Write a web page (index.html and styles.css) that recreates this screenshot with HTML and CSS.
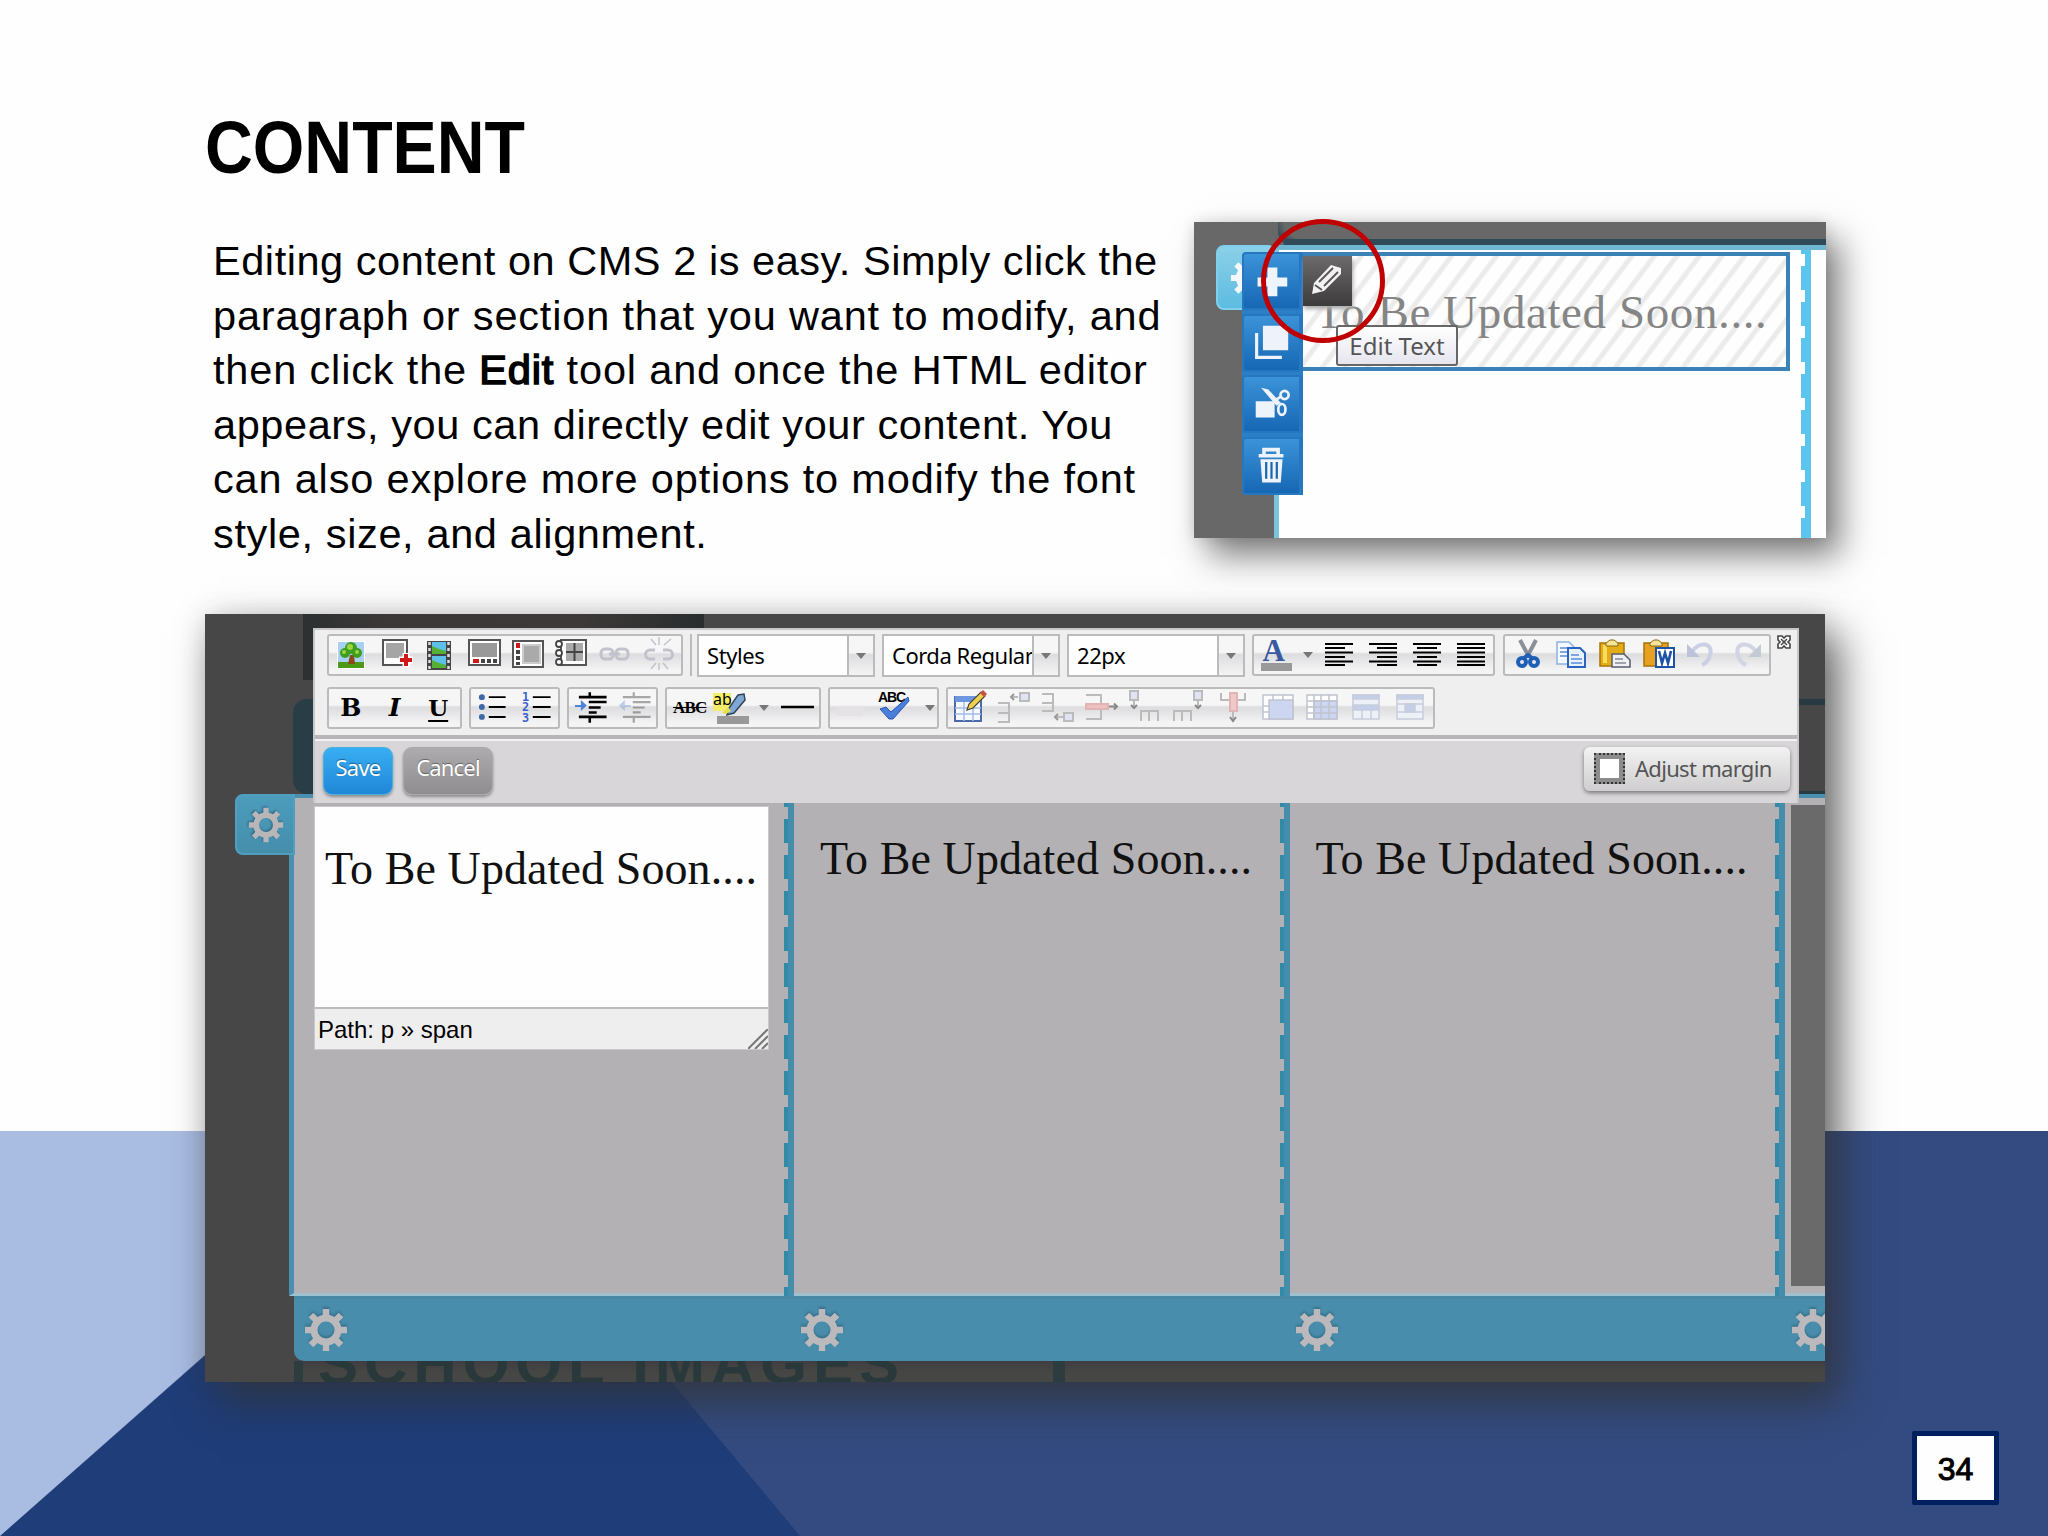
FILE: index.html
```html
<!DOCTYPE html>
<html lang="en">
<head>
<meta charset="utf-8">
<title>Content</title>
<link rel="stylesheet" href="styles.css">
</head>
<body>
<svg class="defs" aria-hidden="true">
  <symbol id="gear" viewBox="-22 -22 44 44">
    <g fill="none" stroke="currentColor">
      <circle r="12" stroke-width="7"/>
      <path stroke-width="6.5" d="M0-14V-21M0 14V21M-14 0H-21M14 0H21M-10-10L-15-15M10-10L15-15M-10 10L-15 15M10 10L15 15"/>
    </g>
  </symbol>
</svg>
<main class="slide">
  <svg class="backdrop" viewBox="0 0 2048 405" aria-hidden="true">
    <path fill="#334b80" d="M0 0H2048V405H0Z"/>
    <path fill="#1f3d79" d="M462 0L800 405H0Z"/>
    <path fill="#a9bce2" d="M0 0H459L0 405Z"/>
  </svg>
  <h1 class="title">CONTENT</h1>
  <section class="intro">
    <p class="copy">
      <span class="l1">Editing content on CMS 2 is easy. Simply click the</span>
      <span class="l2">paragraph or section that you want to modify, and</span>
      <span class="l3">then click the <b>Edit</b> tool and once the HTML editor</span>
      <span class="l4">appears, you can directly edit your content. You</span>
      <span class="l5">can also explore more options to modify the font</span>
      <span class="l6">style, size, and alignment.</span>
    </p>
    <div class="preview">
      <div class="preview-shot">
        <div class="shot-corner"></div>
        <div class="shot-band"></div>
        <div class="shot-page"><div class="shot-rail"></div></div>
        <div class="shot-tab"><svg><use href="#gear"/></svg></div>
        <div class="shot-block"><span class="corda">To Be Updated Soon....</span></div>
        <div class="shot-tools">
          <svg viewBox="0 0 61 60"><path d="M26 15h11v11h11v10H37v11H26V36H15V26h11z" fill="#eef4fb"/></svg>
          <svg viewBox="0 0 61 56"><path d="M21 9h28v27H21z" fill="#eef2fb"/><path d="M14 17v27h28" fill="none" stroke="#eef2fb" stroke-width="3.500"/></svg>
          <svg viewBox="0 0 61 56"><path d="M13 25h21v18H13z" fill="#eef2fb"/><path d="M19 10l8 2 14 15-5 3z" fill="#eef2fb"/><g fill="none" stroke="#eef2fb" stroke-width="3"><path d="M33 25l9-6"/><circle cx="45" cy="18" r="4.500"/><ellipse cx="42" cy="34" rx="4" ry="6"/></g></svg>
          <svg viewBox="0 0 61 61"><g fill="none" stroke="#eef2fb" stroke-width="4"><path d="M16 19h28M22 17v-5h16v5"/></g><path d="M18 23h25l-2 26H20z" fill="#eef2fb"/><path d="M24.500 26v19M30.500 26v19M36.500 26v19" stroke="#1a66ae" stroke-width="2.500"/></svg>
        </div>
        <div class="shot-pencil"><svg viewBox="0 0 49 50"><path d="M9 38l2-11 17-18 10 3v6L21 35z" fill="#f2f2f2"/><path d="M12 29l7 5M16 26l14-14M21 30l14-14" stroke="#555" stroke-width="1.800"/></svg></div>
        <div class="tooltip">Edit Text</div>
      </div>
      <div class="ring"></div>
    </div>
  </section>

  <section class="editor">
    <div class="ghost-top"></div><div class="ghost-side"></div><div class="ghost-line"></div>
    <div class="canvas">
      <div class="col first">
        <div class="textbox">
          <div class="text-area"><span class="corda">To Be Updated Soon....</span></div>
          <div class="path-bar"><span>Path: p » span</span><svg viewBox="0 0 20 20"><path d="M0 20L20 0M7 20L20 7M14 20L20 14" stroke="#777" stroke-width="2"/></svg></div>
        </div>
        <i class="rail"></i>
      </div>
      <div class="col"><span class="corda">To Be Updated Soon....</span><i class="rail"></i></div>
      <div class="col"><span class="corda">To Be Updated Soon....</span><i class="rail"></i></div>
      <div class="col last"></div>
    </div>
    <div class="footer-bar">
      <svg><use href="#gear"/></svg><svg><use href="#gear"/></svg><svg><use href="#gear"/></svg><svg><use href="#gear"/></svg>
    </div>
    <div class="under"><span>SCHOOL IMAGES</span></div>
    <div class="gear-tab"><svg><use href="#gear"/></svg></div>

    <div class="panel">
      <div class="bars">
        <div class="bar">
          <div class="group g1">
            <svg viewBox="0 0 44 40"><path d="M8 6h28v28H8z" fill="#fff"/><path d="M9 7h26v20H9z" fill="#a8d0f5"/><path d="M9 27h26v6H9z" fill="#4c9a18"/><path d="M21 20h4l1 9h-7z" fill="#8a4b16"/><g fill="#3f9d20"><circle cx="16" cy="18" r="5"/><circle cx="22" cy="13" r="6"/><circle cx="28" cy="18" r="5"/></g><g fill="#9bd63d"><circle cx="21" cy="12" r="3"/><circle cx="15" cy="17" r="2"/><circle cx="28" cy="17" r="2"/></g></svg>
            <svg viewBox="0 0 44 40"><path d="M10 5h24v25H10z" fill="#fff" stroke="#555" stroke-width="2"/><path d="M13 8h18v15H13z" fill="#a5a5a5"/><path d="M33 18v14M26 25h14" stroke="#fff" stroke-width="7"/><path d="M33 19v12M27 25h12" stroke="#d01818" stroke-width="4"/></svg>
            <svg viewBox="0 0 44 40"><path d="M10 6h24v29H10z" fill="#444"/><path d="M15 7h14v12H15zM15 21h14v12H15z" fill="#5cc0e8"/><path d="M15 11l7 3 7 2v3H15zM15 25l7 3 7 2v3H15z" fill="#55b035"/><path d="M12.500 7v27M31.500 7v27" stroke="#ddd" stroke-width="2.500" stroke-dasharray="3 3"/></svg>
            <svg viewBox="0 0 44 40"><path d="M8 5h31v25H8z" fill="#fff" stroke="#555" stroke-width="2"/><path d="M11 8h25v14H11z" fill="#999"/><path d="M12 26h6" stroke="#d01818" stroke-width="4"/><path d="M20 26h16" stroke="#444" stroke-width="4" stroke-dasharray="4 2"/></svg>
            <svg viewBox="0 0 44 40"><path d="M8 6h30v26H8z" fill="#fff" stroke="#555" stroke-width="2"/><path d="M18 10h17v18H18z" fill="#aaa" stroke="#ccc" stroke-width="2"/><path d="M13 8v5" stroke="#d01818" stroke-width="4"/><path d="M13 15v15" stroke="#444" stroke-width="4" stroke-dasharray="4 2"/></svg>
            <svg viewBox="0 0 44 40"><path d="M12 5h25v25H12z" fill="#fff" stroke="#555" stroke-width="2"/><path d="M17 8h17v18H17z" fill="#aaa"/><path d="M25.500 8v18M17 17h17" stroke="#444" stroke-width="2"/><g fill="#fff" stroke="#444" stroke-width="1.800"><circle cx="10" cy="9" r="3"/><circle cx="10" cy="18" r="3"/><circle cx="10" cy="27" r="3"/></g></svg>
            <svg viewBox="0 0 44 40" fill="none" stroke="#c2c2cc" stroke-width="3"><rect x="8" y="14" width="12" height="10" rx="4"/><rect x="23" y="14" width="12" height="10" rx="4"/><path d="M16 19h11"/></svg>
            <svg viewBox="0 0 44 40" fill="none" stroke="#c2c2cc" stroke-width="3"><path d="M18 15h-5a4 4 0 000 9h5M26 15h5a4 4 0 010 9h-5"/><path d="M14 4l5 6M22 2v8M34 4l-7 6M14 34l5-6M22 35v-7M31 34l-5-6" stroke-width="1.500"/></svg>
          </div>
          <i class="sep"></i>
          <div class="select s1"><span>Styles</span><i></i></div>
          <div class="select s2"><span>Corda Regular</span><i></i></div>
          <div class="select s3"><span>22px</span><i></i></div>
          <div class="group g2">
            <span class="letter-a">A</span><i class="caret"></i>
            <svg viewBox="0 0 44 40"><path d="M8 9h28M8 13h20M8 17.500h28M8 22h20M8 26.500h28M8 30h20" stroke="#000" stroke-width="2"/></svg>
            <svg viewBox="0 0 44 40"><path d="M8 9h28M16 13h20M8 17.500h28M16 22h20M8 26.500h28M16 30h20" stroke="#000" stroke-width="2"/></svg>
            <svg viewBox="0 0 44 40"><path d="M8 9h28M12 13h20M8 17.500h28M12 22h20M8 26.500h28M12 30h20" stroke="#000" stroke-width="2"/></svg>
            <svg viewBox="0 0 44 40"><path d="M8 9h28M8 13h28M8 17.500h28M8 22h28M8 26.500h28M8 30h28" stroke="#000" stroke-width="2"/></svg>
          </div>
          <div class="group g3">
            <svg viewBox="0 0 44 40"><path d="M14 5l9 17M30 5l-9 17" stroke="#8a8f98" stroke-width="4"/><g fill="none" stroke="#1e5fb8" stroke-width="4"><circle cx="16" cy="27" r="4"/><circle cx="28" cy="27" r="4"/><path d="M18 23l4-3 4 3"/></g></svg>
            <svg viewBox="0 0 44 40"><path d="M7 7h12l5 5v17H7z" fill="#f4f8ff" stroke="#8fb0e0" stroke-width="1.500"/><path d="M18 13h12l5 5v14H18z" fill="#e8f1ff" stroke="#2b63c0" stroke-width="2"/><path d="M10 13h7M10 17h7M10 21h7M21 20h8M21 24h11M21 28h11" stroke="#5b8cd8" stroke-width="1.500"/></svg>
            <svg viewBox="0 0 44 40"><path d="M6 8h24v23H6z" fill="#e5ac18" stroke="#a87408" stroke-width="1.500"/><path d="M9 10h4v18H9z" fill="#f9dc60"/><path d="M12 11V8l4-3h4l4 3v3z" fill="#f6e49a" stroke="#8a6a10"/><path d="M18 19h12l6 6v7H18z" fill="#eef0f4" stroke="#555e6c" stroke-width="1.500"/><path d="M21 24h8M21 28h11" stroke="#889" stroke-width="1.500"/></svg>
            <svg viewBox="0 0 44 40"><path d="M6 8h24v23H6z" fill="#e8a020" stroke="#a87408" stroke-width="1.500"/><path d="M12 11V8l4-3h4l4 3v3z" fill="#f6e49a" stroke="#8a6a10"/><path d="M18 13h18v19H18z" fill="#fff" stroke="#1d52a8" stroke-width="2"/><path d="M21 16l3 12 3-10 3 10 3-12" fill="none" stroke="#1d52a8" stroke-width="2.600"/></svg>
            <svg viewBox="0 0 44 40"><path d="M10 17c6-11 22-10 18 3-1 5-4 8-8 10" fill="none" stroke="#ccd0e4" stroke-width="4"/><path d="M5 9v13h13z" fill="#bcc3da"/></svg>
            <svg viewBox="0 0 44 40"><path d="M30 17c-6-11-22-10-18 3 1 5 4 8 8 10" fill="none" stroke="#d0d4e4" stroke-width="4"/><path d="M35 9v13H22z" fill="#c2cad4"/></svg>
          </div>
          <svg class="close" viewBox="0 0 14 14"><path d="M1 1h4l2 2 2-2h4v4l-2 2 2 2v4H9l-2-2-2 2H1V9l2-2-2-2z" fill="#fff" stroke="#444" stroke-width="1.600"/><path d="M4 4l6 6M10 4l-6 6" stroke="#444" stroke-width="1.500"/></svg>
        </div>
        <div class="bar">
          <div class="group h1g"><b class="fmt">B</b><b class="fmt it">I</b><b class="fmt un">U</b></div>
          <div class="group h2g">
            <svg viewBox="0 0 44 40"><path d="M18 9h17M18 19h17M18 29h17" stroke="#000" stroke-width="2"/><g fill="#3e68a8"><circle cx="11" cy="9" r="3"/><circle cx="11" cy="19" r="3"/><circle cx="11" cy="29" r="3"/></g></svg>
            <svg viewBox="0 0 44 40"><path d="M18 9h18M18 19h18M18 29h18" stroke="#000" stroke-width="2"/><g fill="#3a62c8" font-family="DejaVu Sans Mono" font-weight="bold" font-size="12"><text x="7" y="13">1</text><text x="7" y="23.500">2</text><text x="7" y="34">3</text></g></svg>
          </div>
          <div class="group h3g">
            <svg viewBox="0 0 44 40"><path d="M10 9h28M20 14h18M20 19.500h12M20 24.500h8M10 29h28M21 4v4M21 30v5" stroke="#000" stroke-width="2.600"/><path d="M6 17h6v-5l6 5.500-6 5.500v-4H6z" fill="#4f83d8"/></svg>
            <svg viewBox="0 0 44 40" opacity=".4"><path d="M10 9h28M20 14h18M20 19.500h12M20 24.500h8M10 29h28M21 4v4M21 30v5" stroke="#333" stroke-width="2.200"/><path d="M18 17h-6v-5l-6 5.500 6 5.500v-4h6z" fill="#6f93d8"/></svg>
          </div>
          <div class="group h4g">
            <s class="abc">ABC</s>
            <svg viewBox="0 0 44 40"><path d="M5 5h18v18H5z" fill="#f2ee6a"/><text x="5" y="17" font-family="Noto Sans" font-size="16">ab</text><path d="M36 6l1 6-11 13-7 2 2-7 9-13z" fill="#7fa6d4" stroke="#345" stroke-width="1.500"/><path d="M14 25l6-6 3 4-5 3z" fill="#e6df50"/><path d="M9 28h32v8H9z" fill="#999"/></svg>
            <i class="caret"></i>
            <svg viewBox="0 0 44 40"><path d="M6 19h33" stroke="#000" stroke-width="2.400"/></svg>
          </div>
          <div class="group h5g">
            <svg viewBox="0 0 44 40"><path d="M7 19h26v9H7z" fill="#e4e2e4"/></svg>
            <svg viewBox="0 0 44 40"><text x="4" y="14" font-family="Liberation Sans" font-weight="bold" font-size="14" textLength="28">ABC</text><path d="M6 21l6-2 5 5L34 9l1 4-16 18h-4z" fill="#4a7edb" stroke="#2b57b0"/></svg>
            <i class="caret"></i>
          </div>
          <div class="group h6g">
            <svg viewBox="0 0 44 40"><path d="M7 9h26v24H7z" fill="#f6f9ff" stroke="#4a6aa8" stroke-width="2"/><path d="M7 8h26v6H7z" fill="#6d96e0"/><path d="M7 20h26M7 26h26M16 14v19M25 14v19" stroke="#a8bce8" stroke-width="1.500"/><path d="M19 22l2-6L33 4l4 4-12 12z" fill="#f0d050" stroke="#443" stroke-width="1.200"/><path d="M32 5l3-3 4 4-3 3z" fill="#c85040"/></svg>
            <svg viewBox="0 0 44 40" fill="none" stroke="#bbb" stroke-width="2"><path d="M6 15h11v19H6M6 25h11M19 9h7"/><path d="M28 5h9v8h-9z" fill="#dfe3f4"/><path d="M22 6l-3 3 3 3" stroke="#999"/></svg>
            <svg viewBox="0 0 44 40" fill="none" stroke="#bbb" stroke-width="2"><path d="M6 6h11v17H6M6 15h11M19 29h8"/><path d="M28 25h9v8h-9z" fill="#dfe3f4"/><path d="M22 26l-3 3 3 3" stroke="#999"/></svg>
            <svg viewBox="0 0 44 40" fill="none" stroke="#bbb" stroke-width="2"><path d="M6 7h15v24H6"/><path d="M6 16h22v5H6z" fill="#f0c0c0" stroke="#e0b4b4"/><path d="M29 18.500h8M34 15.500l3 3-3 3" stroke="#888"/></svg>
            <svg viewBox="0 0 44 40" fill="none" stroke="#bbb" stroke-width="2"><path d="M17 33V23h17v10M25 23v10M10 12v8"/><path d="M6 3h8v9H6z" fill="#dfe3f4"/><path d="M7 17l3 3 3-3" stroke="#888"/></svg>
            <svg viewBox="0 0 44 40" fill="none" stroke="#bbb" stroke-width="2"><path d="M6 33V23h17v10M14 23v10M30 12v8"/><path d="M26 3h8v9h-8z" fill="#dfe3f4"/><path d="M27 17l3 3 3-3" stroke="#888"/></svg>
            <svg viewBox="0 0 44 40" fill="none" stroke="#bbb" stroke-width="2"><path d="M9 5v7h24V5M21 23v9"/><path d="M18 5h7v18h-7z" fill="#f0c8c8" stroke="#e0b4b4"/><path d="M18 29l3 4 3-4" stroke="#888"/></svg>
            <svg viewBox="0 0 44 40" fill="#fff" stroke="#c0c4d0" stroke-width="1.500"><path d="M7 7h30v24H7z"/><path d="M13 12h24v19H13z" fill="#cdd6f0"/><path d="M17 7v5M27 7v5M7 18h6M7 24h6"/></svg>
            <svg viewBox="0 0 44 40" fill="#fff" stroke="#c0c4d0" stroke-width="1.500"><path d="M7 7h30v24H7z"/><path d="M14 13h23v18H14z" fill="#cdd6f0"/><path d="M14 7v24M21 7v24M29 7v24M7 13h30M7 19h30M7 25h30"/></svg>
            <svg viewBox="0 0 44 40" fill="#eef0f8" stroke="#c8cddc" stroke-width="1.500"><path d="M9 7h26v24H9z"/><path d="M9 7h26v4H9zM9 17h26v5H9z" fill="#c3cee8"/><path d="M18 22v9M27 22v9"/></svg>
            <svg viewBox="0 0 44 40" fill="#eef0f8" stroke="#c8cddc" stroke-width="1.500"><path d="M9 7h26v24H9z"/><path d="M9 7h26v4H9zM17 16h10v8H17z" fill="#c3cee8"/><path d="M9 16h26M9 24h26"/></svg>
          </div>
        </div>
      </div>
      <div class="actions">
        <button class="btn save">Save</button>
        <button class="btn cancel">Cancel</button>
        <button class="adjust"><i></i><span>Adjust margin</span></button>
      </div>
    </div>
  </section>
  <div class="page-no">34</div>
</main>
</body>
</html>
```
FILE: styles.css
```css
* { box-sizing: border-box; }
body { margin: 0; background: #fefefe; }
.defs { position: absolute; width: 0; height: 0; }
svg { display: block; flex: none; }
.slide { position: relative; width: 2048px; height: 1536px; overflow: hidden; padding-left: 205px; font-family: "Liberation Sans", Arial, sans-serif; color: #000; }
.backdrop { position: absolute; left: 0; bottom: 0; width: 2048px; height: 405px; }
.title { margin: 0; height: 222px; padding-top: 105px; font-size: 75px; line-height: 84px; font-weight: bold; transform: scaleX(.883); transform-origin: 0 0; }
.intro { display: flex; height: 392px; }
.copy { margin: 0; width: 989px; padding: 12px 0 0 8px; font-size: 41.5px; line-height: 54.6px; }
.copy span { display: block; white-space: nowrap; }
.copy b { font-weight: normal; -webkit-text-stroke: 1.6px #000; }
.l1 { letter-spacing: .55px; }
.l2 { letter-spacing: .82px; }
.l3 { letter-spacing: .84px; }
.l4 { letter-spacing: .58px; }
.l5 { letter-spacing: .82px; }
.l6 { letter-spacing: .63px; }
.corda { font-family: "Liberation Serif", "Times New Roman", serif; font-size: 46px; line-height: 52px; letter-spacing: .1px; white-space: nowrap; color: #111; }

/* preview screenshot */
.preview { position: relative; width: 632px; height: 316px; box-shadow: 14px 18px 32px rgba(0,0,0,.5), 0 0 14px rgba(0,0,0,.12); }
.preview-shot { position: relative; width: 632px; height: 316px; overflow: hidden; background: #686868; }
.preview-shot > div { position: absolute; }
.shot-corner { left: 84px; top: 0; width: 40px; height: 24px; border-radius: 0 0 0 14px; background: radial-gradient(ellipse at 100% 0, #686868 60%, #3d505a 75%); }
.shot-band { left: 90px; right: 0; top: 17px; height: 6px; background: #2f4b5a; }
.shot-page { left: 80px; right: 0; top: 23px; bottom: 0; background: #fefefe; border-top: 5px solid #6db7d2; border-left: 5px solid #7ac4de; }
.shot-rail { margin-left: 522px; width: 10px; height: 100%; background: linear-gradient(#5cc5ee, #5cc5ee) 4px 0/6px 100% no-repeat, repeating-linear-gradient(#5cc5ee 0 4px, transparent 4px 16px, #5cc5ee 16px 36px); }
.shot-tab { left: 22px; top: 23px; width: 60px; height: 65px; border-radius: 8px; background: linear-gradient(#8bd0e8, #5cbce0); border: 2px solid #7fd0ec; color: #f4f8fa; }
.shot-tab svg { width: 40px; height: 42px; margin: 10px 0 0 12px; }
.shot-block { left: 80px; top: 30px; width: 516px; height: 119px; border: 4px solid #3a83b8; padding: 30px 0 0 37px; color: #858585; background: repeating-linear-gradient(127deg, #fefefe 0 9px, #ebebeb 11px 14px, #fefefe 16px 18px); }
.shot-block .corda { font-size: 47px; letter-spacing: .6px; color: #858585; }
.shot-tools { left: 48px; top: 30px; width: 61px; height: 243px; display: flex; flex-direction: column; justify-content: space-between; background: #2b7fc6; border-radius: 6px 0 0 6px; }
.shot-tools svg { width: 61px; height: 58px; border-radius: 4px; background: linear-gradient(#3b93d8, #1667b4); border: 2px solid #2676c0; border-right-width: 4px; }
.shot-pencil { left: 109px; top: 34px; width: 49px; height: 50px; background: linear-gradient(#6c6a6a, #3d3b3b); box-shadow: 1px 3px 4px #aaa; }
.tooltip { left: 142px; top: 103px; width: 122px; height: 41px; border: 2px solid #666; border-radius: 3px; background: linear-gradient(#fff, #e6e5ef); color: #555; font: 24px/37px "Noto Sans", sans-serif; text-align: center; white-space: nowrap; }
.ring { position: absolute; left: 67px; top: -3px; width: 124px; height: 124px; border: 5px solid #c00000; border-radius: 50%; }

/* editor screenshot */
.editor { position: relative; width: 1620px; height: 768px; padding: 184px 0 0 84px; background: #484748; box-shadow: 14px 20px 40px rgba(50,50,50,.75), 0 0 24px rgba(60,60,60,.14); display: flex; flex-direction: column; }
.ghost-top { position: absolute; left: 98px; top: 0; width: 401px; height: 66px; background: linear-gradient(90deg, #2b3030, #3c3837 20%, #3c3938 70%, #292d2d); }
.ghost-side { position: absolute; left: 88px; top: 85px; width: 60px; height: 95px; border-radius: 14px; background: #293d47; }
.ghost-line { position: absolute; right: 0; top: 85px; width: 26px; height: 95px; border-top: 6px solid #273942; border-bottom: 3px solid #273942; }
.canvas { flex: none; display: flex; height: 498px; background: #b3b1b3; border-left: 5px solid #4a8eb0; box-shadow: 0 -4px #4a8eb0; border-bottom: 3px solid #9fc1ce; overflow: visible; }
.col { position: relative; width: 495.500px; flex: none; padding: 35px 0 0 26px; }
.first { width: 500px; padding: 8px 0 0 20px; }
.canvas .last { flex: 1; width: auto; padding: 0; margin: 7px 0 7px 6px; background: #6a6a6b; }
.rail { position: absolute; right: 0; top: 5px; bottom: -3px; width: 10px; background: linear-gradient(#468dac, #468dac) 4px 0/6px 100% no-repeat, linear-gradient(#318aa8 0 4px, transparent 4px 16px, #318aa8 16px 36px) 0 0/4px 36px repeat-y; }
.textbox { width: 455px; border: 1px solid #c9c7c9; }
.text-area { height: 200px; padding: 36px 0 0 10px; background: #fefefe; }
.path-bar { display: flex; justify-content: space-between; align-items: flex-end; height: 42px; border-top: 2px solid #bbb; background: #efeeef; font-size: 24px; line-height: 38px; padding-left: 3px; }
.path-bar svg { width: 20px; height: 20px; }
.footer-bar { flex: none; display: flex; align-items: center; gap: 451.500px; margin-left: 5px; height: 65px; padding-left: 10px; overflow: hidden; background: #488dab; border-top: 3px solid #4888a2; border-bottom-left-radius: 10px; color: #bbb9bb; z-index: 1; }
.footer-bar svg { width: 44px; height: 44px; overflow: visible; filter: drop-shadow(0 -2px 1px #38718c); }
.under { flex: none; height: 21px; margin-left: 5px; overflow: hidden; display: flex; align-items: flex-end; background: linear-gradient(90deg, #2d3c3e 9px, transparent 9px 759px, #2d3c3e 759px 771px, transparent 771px), linear-gradient(#403d42, #464744 60%); }
.under span { margin: 0 0 -12px 24px; font: bold 60px/60px "Liberation Sans", sans-serif; color: #29393b; letter-spacing: 6px; white-space: nowrap; }
.gear-tab { position: absolute; left: 30px; top: 180px; width: 60px; height: 61px; border-radius: 8px 0 0 8px; background: linear-gradient(#4c9cbc, #458eac); border: 2px solid #4fa0c0; color: #b8b6b8; padding: 11px 0 0 11px; }
.gear-tab svg { width: 36px; height: 36px; filter: drop-shadow(-1px -1px 1px #2d657e); }

.panel { position: absolute; left: 108px; top: 14px; width: 1486px; height: 175px; z-index: 2; background: #d8d6d8; border: 2px solid #c8c6c8; border-bottom: 0; }
.bars { display: grid; gap: 10px; height: 109px; padding: 4px 0 0 12px; background: #efeff0; border-bottom: 4px solid #b8b6b8; align-content: start; }
.bar { display: flex; gap: 7px; height: 42.500px; }
.group { flex: none; display: flex; align-items: center; height: 42px; border: 2px solid #bbb; border-radius: 3px; background: linear-gradient(#f6f6f7 0 42%, #dddcde 48%, #f4f4f5 90%); }
.group svg { width: 44px; height: 40px; }
.g1 { width: 356px; }
.g2 { width: 243px; }
.g3 { width: 268px; padding-left: 1px; margin-left: 1px; }
.sep { width: 2px; height: 42px; background: #bbb; margin-right: -2px; }
.select { display: flex; flex: none; width: 178px; height: 43px; border: 2px solid #bbb; background: #fefefe; font: 22px/38px "Noto Sans", sans-serif; letter-spacing: -.4px; }
.select span { flex: 1; width: 0; white-space: nowrap; padding-left: 8px; }
.s2 { letter-spacing: -.5px; }
.select i { flex: none; width: 26px; border-left: 2px solid #bbb; background: linear-gradient(#f6f6f7 0 42%, #dddcde 48%, #f4f4f5); display: grid; place-items: center; }
.select i::after, .caret::after { content: ""; display: block; border: 5px solid transparent; border-top: 6px solid #777; border-bottom: 0; }
.caret { width: 16px; display: grid; place-items: center; }
.letter-a { width: 32px; height: 32px; margin: 0 8px 0 7px; border-bottom: 8px solid #999; font: bold 31px/24px "Liberation Serif", serif; color: #3a5ba0; text-align: center; padding-right: 6px; }
.g2 .caret { margin-right: 1px; }
.close { width: 14px; height: 14px; margin: 1px 0 0 -1px; }
.h1g { width: 135px; }
.h2g { width: 91px; }
.h3g { width: 91px; }
.h4g { width: 156px; }
.h5g { width: 111px; }
.h6g { width: 489px; }
.h2g svg, .h3g svg { width: 43.500px; }
.fmt { width: 44px; text-align: center; font: bold 25px/30px "DejaVu Serif", serif; }
.it { font-style: italic; }
.un { text-decoration: underline; text-underline-offset: 4px; text-decoration-thickness: 2px; font-size: 23px; }
.abc { width: 44px; padding-left: 6px; font: bold 17px/24px "Liberation Serif", serif; letter-spacing: -.8px; }
.h4g .caret { margin: 0 4px; }
.h5g .caret { margin-left: 4px; }
.actions { display: flex; align-items: flex-start; height: 64px; padding: 6px 7px 0 8px; border-top: 2px solid #f2f2f2; }
.btn { height: 48px; border: 0; border-radius: 9px; color: #fff; padding: 0 0 8px; font: 22px/30px "Noto Sans", sans-serif; letter-spacing: -.8px; text-shadow: 0 -1px 1px rgba(0,0,0,.4); box-shadow: 0 2px 3px rgba(0,0,0,.35); }
.save { width: 70px; background: linear-gradient(#38aef2, #2087d8); border: 1px solid #4ab0e0; }
.cancel { width: 90px; margin-left: 10px; background: linear-gradient(#adabad, #8f8d8f); border: 1px solid #aaa; }
.adjust { display: flex; align-items: center; gap: 10px; width: 206px; height: 44px; margin-left: auto; padding: 0 0 2px 10px; border: 0; border-radius: 6px; background: linear-gradient(#f3f3f3, #cfcdcf); box-shadow: 0 2px 4px rgba(0,0,0,.45); color: #555; font: 22px/30px "Noto Sans", sans-serif; letter-spacing: -.7px; white-space: nowrap; }
.adjust i { flex: none; width: 31px; height: 31px; border: 2px dotted #333; background: linear-gradient(#fff, #fff) center/19px 19px no-repeat, #8c8c8c; }
.page-no { position: absolute; left: 1912px; top: 1431px; width: 87px; height: 74px; border: 5px solid #001f5f; border-radius: 2px; background: #fefefe; font: 32px/66px "Liberation Sans", sans-serif; -webkit-text-stroke: 1px #000; text-align: center; }
```
